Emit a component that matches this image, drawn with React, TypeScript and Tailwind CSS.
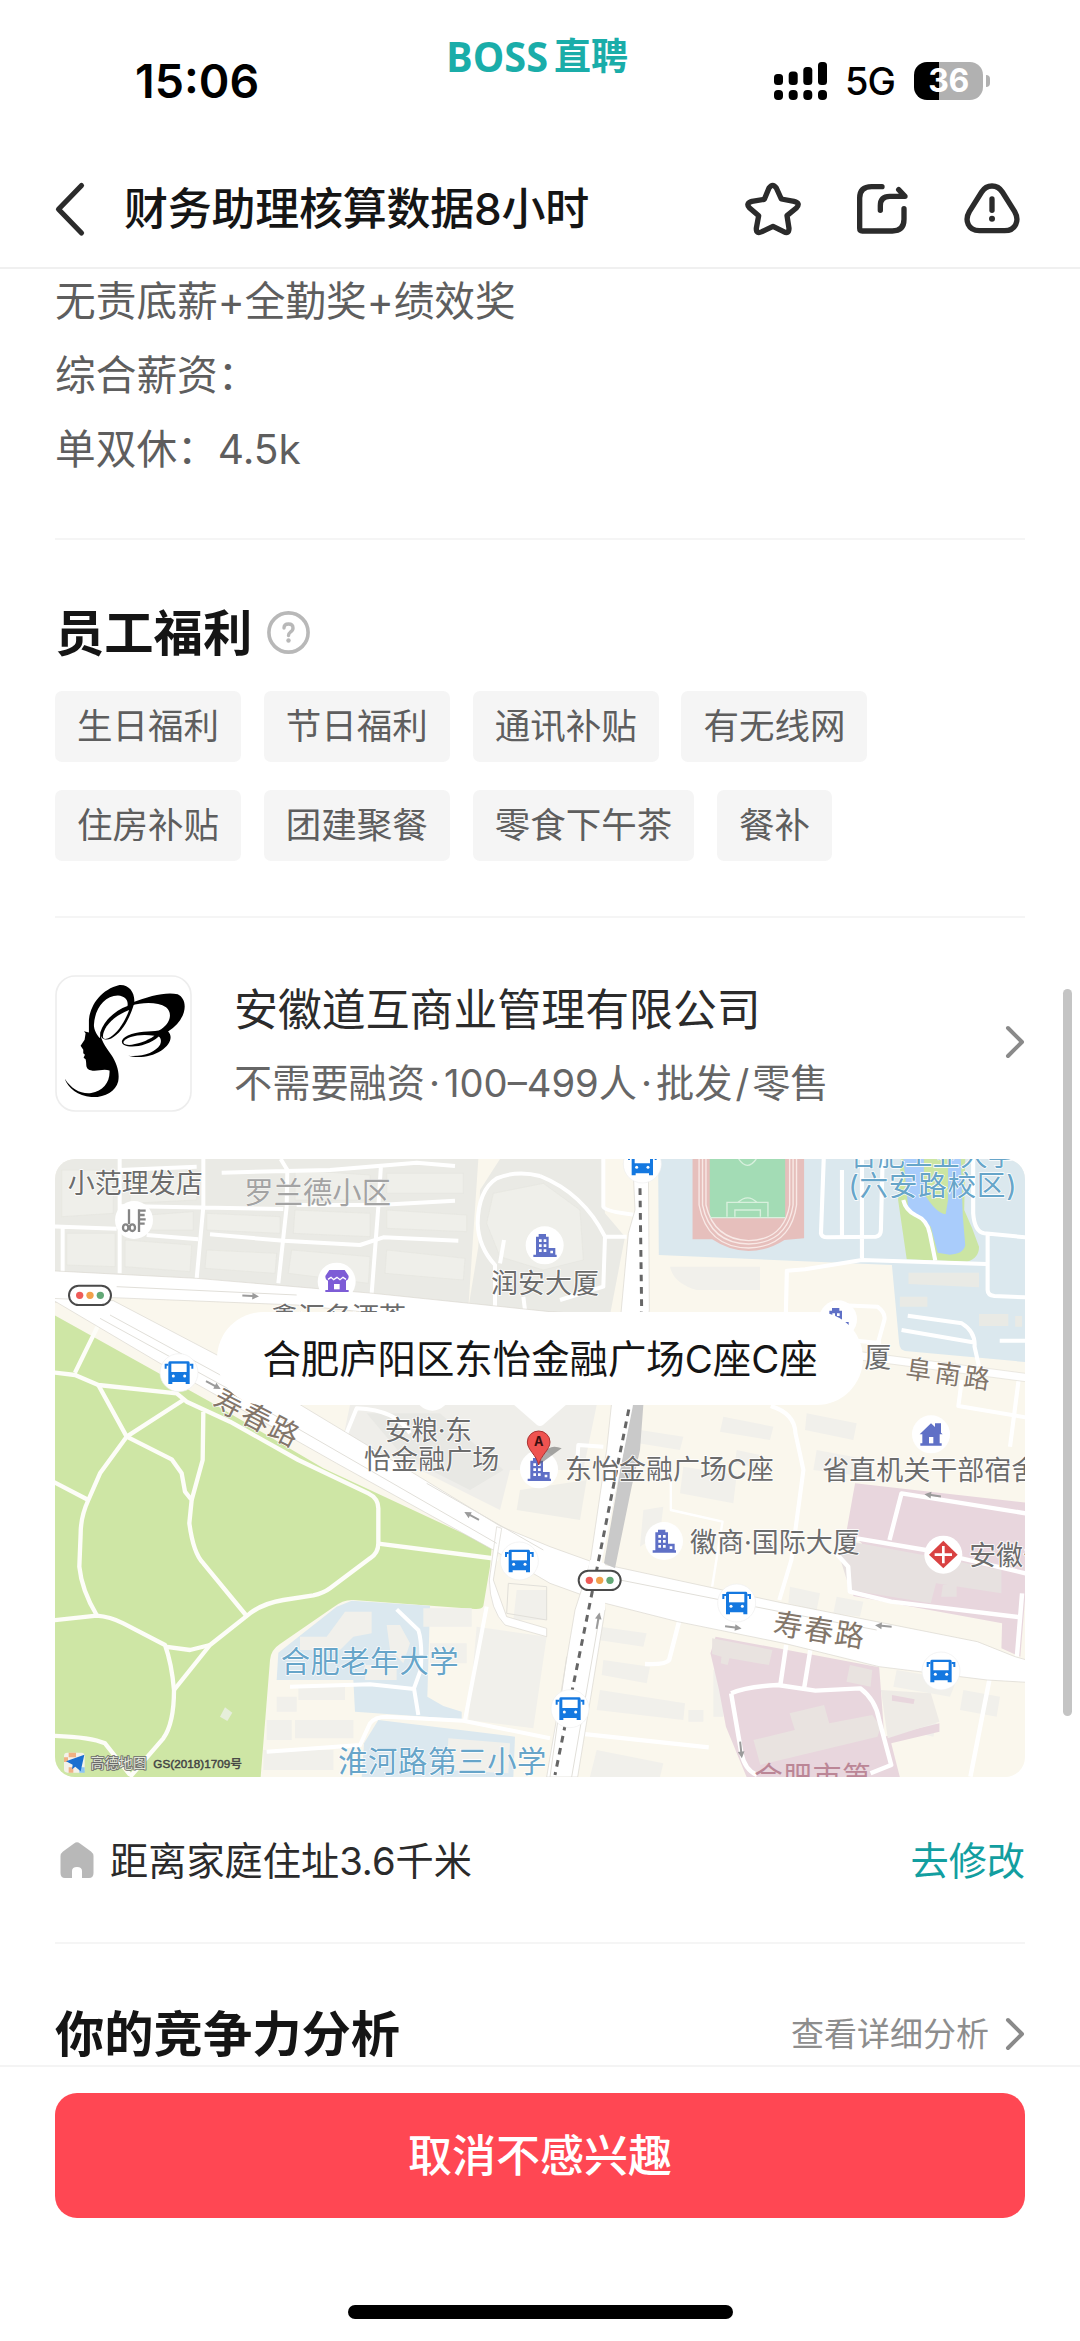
import React from 'react';

const benefitRows: string[][] = [
    ['生日福利', '节日福利', '通讯补贴', '有无线网'],
    ['住房补贴', '团建聚餐', '零食下午茶', '餐补'],
];

const Divider: React.FC<{ className?: string }> = ({ className = '' }) => (
    <div className={`h-[2px] bg-[#f5f5f5] ${className}`} />
);

const Chevron: React.FC = () => (
    <svg className="w-[20px] h-[34px]" viewBox="0 0 20 34" fill="none" stroke="#8a8a8a" strokeWidth="4" strokeLinecap="round" strokeLinejoin="round">
        <path d="M3 3 L17 17 L3 31" />
    </svg>
);

const StatusBar: React.FC = () => (
    <div className="relative h-[150px]">
        <div className="flex items-center justify-between h-[54px] pt-[54px] pl-[135px] pr-[93px] box-content">
            <span className="text-[46.5px] leading-[54px] font-semibold text-black">15:06</span>
            <div className="flex items-center">
                <svg className="w-[53px] h-[38px]" viewBox="0 0 53 38">
                    <rect x="0" y="12" width="9" height="11" rx="3.5" />
                    <rect x="14.7" y="9.5" width="9" height="13.5" rx="3.5" />
                    <rect x="29.3" y="5" width="9" height="18" rx="3.5" />
                    <rect x="44" y="0" width="9" height="23" rx="3.5" />
                    <rect x="0" y="28" width="9" height="10" rx="4" />
                    <rect x="14.7" y="28" width="9" height="10" rx="4" />
                    <rect x="29.3" y="28" width="9" height="10" rx="4" />
                    <rect x="44" y="28" width="9" height="10" rx="4" />
                </svg>
                <span className="ml-[18px] w-[50px] text-[38px] leading-[40px] font-medium tracking-[-1px] text-black">5G</span>
                <div className="ml-[19px] flex w-[69px] h-[38px] items-center justify-center rounded-[13px] bg-[linear-gradient(90deg,#000_25px,#b1b1b1_25px)] text-[32px] leading-[38px] font-bold tracking-[-0.5px] text-white">
                    36
                </div>
                <div className="ml-[3px] -mr-[3px] w-[4px] h-[12px] rounded-r-full bg-[#b1b1b1]" />
            </div>
        </div>
        <svg className="absolute left-[440px] top-[20px] w-[200px] h-[70px]" viewBox="440 20 200 70" fill="#1aada9">
            <text x="446" y="72" fontSize="42" fontWeight="700" textLength="102" lengthAdjust="spacingAndGlyphs" className="font-['Open_Sans']">BOSS</text>
            <text x="554" y="69.5" fontSize="37" fontWeight="700" textLength="74" className="font-['Noto_Sans_CJK_SC']">直聘</text>
        </svg>
    </div>
);

const TopBar: React.FC = () => (
    <div className="flex items-center h-[117px] pl-[54px] pr-[58px]">
        <svg className="w-[32px] h-[56px]" viewBox="54 180 32 56" fill="none" stroke="#2b2b2b" strokeWidth="5.2" strokeLinecap="round" strokeLinejoin="round">
            <path d="M81.5 184.5 L58.5 208.3 L81.5 232" />
        </svg>
        <h1 className="ml-[38px] text-[44px] leading-[60px] font-medium tracking-[-0.25px] text-[#151515] whitespace-nowrap">财务助理核算数据8小时</h1>
        <div className="ml-auto flex items-center text-[#2b2b2b]">
            <svg className="w-[60px] h-[56px]" viewBox="127 420 180 168" fill="none" stroke="currentColor" strokeWidth="16" strokeLinejoin="round">
                <path d="M205 441 Q216 425 227 441 L242 474 L280 481 Q301 486 287 501 L259 524 L265 562 Q265 581 249 572 L217 556 L184 572 Q166 580 167 562 L174 524 L146 500 Q134 487 154 481 L191 475 Z" />
            </svg>
            <svg className="ml-[51px] w-[56px] h-[56px]" viewBox="463 420 168 168" fill="none" stroke="currentColor" strokeWidth="16" strokeLinecap="round" strokeLinejoin="round">
                <path d="M547 437 H516 Q480 437 480 471 V562 Q480 570 488 570 H578 Q613 570 613 535 V503" />
                <path d="M542 508 V494 Q542 466 570 466 H616 L597 446" />
            </svg>
            <svg className="ml-[52px] w-[60px] h-[56px]" viewBox="788 416 180 168" fill="none" stroke="currentColor" strokeWidth="16" strokeLinecap="round">
                <path d="M847 449 C862 425 894 425 909 449 L946 508 C961 534 950 565 916 565 H840 C806 565 795 534 810 508 Z" />
                <path d="M878 470 V504" />
                <circle cx="878" cy="529" r="9" fill="currentColor" stroke="none" />
            </svg>
        </div>
    </div>
);

const CompanyLogo: React.FC = () => (
    <svg className="w-[137px] h-[137px] shrink-0" viewBox="16 15 412 412">
        <rect x="19" y="18" width="406" height="406" rx="58" fill="#fff" stroke="#ededed" strokeWidth="5" />
        <path d="M118 188 L118 150 C122 105 155 58 210 45 C240 43 258 70 254 100 C240 150 215 190 185 206 C170 213 152 208 153 190 C151 203 165 228 185 255 C202 280 211 310 206 335 C198 365 165 384 125 382 C85 378 55 355 45 326 C65 358 95 374 125 370 C160 364 182 338 180 302 C165 297 150 302 135 303 C118 303 110 297 110 285 C110 278 109 272 108 268 L102 264 L106 255 L101 250 L101 240 L93 228 L105 210 L108 190 L103 184 Z" />
        <path d="M133 165 C136 115 165 78 205 77 C228 79 237 92 234 108 C200 120 165 148 152 188 L151 205 C142 195 133 180 133 165 Z" fill="#fff" />
        <path d="M160 200 C160 175 190 138 239 120 C225 158 205 187 182 202 C168 210 160 208 160 200 Z" fill="#fff" />
        <path d="M248 98 C300 78 350 65 385 73 C420 90 412 150 356 185 C372 200 362 225 335 243 C305 262 265 266 236 258 C280 262 318 248 332 225 C337 212 334 205 328 200 C300 225 260 233 235 229 C210 224 212 208 235 197 C265 184 300 186 328 182 C362 165 372 130 350 112 C325 96 280 96 244 108 Z" />
        <path d="M222 216 C228 200 275 190 315 198 C292 215 255 227 233 225 C224 224 221 221 222 216 Z" fill="#fff" />
    </svg>
);

type PointProps = { x: number; y: number };

const Bus: React.FC<PointProps> = ({ x, y }) => (
    <g transform={`translate(${x} ${y})`}>
        <circle r="57" fill="#fff" stroke="#eee" strokeWidth="2" />
        <path d="M-28 -34 H28 Q32 -34 32 -28 V34 H20 V28 H-20 V34 H-32 V-28 Q-32 -34 -28 -34 Z" fill="#1478e0" />
        <path d="M-32 -24 H-40 V-12 M32 -24 H40 V-12" fill="none" stroke="#1478e0" strokeWidth="6" />
        <path d="M-23 -27 H23 V-2 H-23 Z" fill="#fff" />
        <circle cx="-17" cy="10" r="4.5" fill="#fff" />
        <circle cx="17" cy="10" r="4.5" fill="#fff" />
    </g>
);

const Tower: React.FC<PointProps> = ({ x, y }) => (
    <g transform={`translate(${x} ${y})`}>
        <circle r="57" fill="#fff" />
        <path d="M-26 28 V-26 H-18 V-34 H4 V-26 H12 V8 H32 V28 H36 V35 H-34 V28 Z" fill="#5f70c6" />
        <path d="M-17 -18 h8 v8 h-8z M-3 -18 h8 v8 h-8z M-17 -3 h8 v8 h-8z M-3 -3 h8 v8 h-8z M-17 12 h8 v8 h-8z M-3 12 h8 v8 h-8z M17 16 h8 v8 h-8z" fill="#fff" />
    </g>
);

const TrafficLight: React.FC<PointProps> = ({ x, y }) => (
    <g transform={`translate(${x} ${y})`}>
        <rect x="-63" y="-29" width="126" height="58" rx="29" fill="#fff" stroke="#4a4a4a" strokeWidth="6" />
        <circle cx="-31" r="11" fill="#ee5b58" />
        <circle r="11" fill="#f1a14b" />
        <circle cx="31" r="11" fill="#62a876" />
    </g>
);

const Arrow: React.FC<PointProps & { rotate: number }> = ({ x, y, rotate }) => (
    <g transform={`translate(${x} ${y}) rotate(${rotate})`} fill="#9b9b9b">
        <path d="M-25 -3 H5 V-10 L25 0 L5 10 V3 H-25 Z" />
    </g>
);

// Map artwork is drawn at three units per pixel
const DistrictMap: React.FC = () => (
    <svg className="block w-[970px] h-[618px]" viewBox="15 27 2910 1854" fontWeight="400">
        <rect x="0" y="0" width="2950" height="1900" fill="#faf7ed" />

        {/* residential blocks */}
        <path d="M0 27 H1285 L1255 475 L965 430 L0 365 Z" fill="#eaeae5" />
        <path d="M1350 27 H1655 L1665 190 L1725 260 L1680 495 L1255 475 L1285 290 L1290 120 Z" fill="#eaeae5" />
        <g fill="#efefea" stroke="#e5e5df" strokeWidth="2">
            <path d="M35 60 H190 V190 L35 200 Z M50 250 H195 V350 L50 345 Z M225 200 L430 185 V240 H225 Z M225 270 L425 285 L420 365 L225 350 Z" />
            <path d="M240 90 L440 75 V150 L240 160 Z M470 190 L690 200 V250 L470 240 Z M470 300 L680 310 L675 370 L465 355 Z" />
            <path d="M735 180 L960 190 V260 L730 250 Z M725 300 L960 320 L955 400 L715 370 Z M1010 180 L1250 195 V245 L1010 235 Z M1010 300 L1245 325 L1240 390 L1005 370 Z" />
            <path d="M735 60 L960 75 V150 H735 Z M1010 70 H1240 V130 H1010 Z" />
            <path d="M1330 130 L1480 100 L1590 180 L1600 330 L1480 360 L1350 320 L1310 220 Z" />
        </g>
        <path d="M900 765 H1640 L1600 960 L1380 960 L1350 1080 L1070 940 L880 860 Z" fill="#efeeea" />
        <path d="M950 790 L1170 790 L1360 960 L1260 1020 L1060 920 Z" fill="#e8e8e4" />
        <path d="M1410 1020 L1610 990 L1590 1110 L1400 1080 Z" fill="#efeee8" />

        {/* park */}
        <path d="M0 488 L480 755 L820 955 L1325 1190 L1320 1250 L1300 1368 Q1297 1378 1275 1377 L910 1350 Q880 1348 850 1372 L690 1482 Q662 1500 660 1530 L632 1881 H0 Z" fill="#cee6a5" />
        <g fill="none" stroke="#fdfdf8" strokeWidth="13" strokeLinejoin="round">
            <path d="M150 515 L75 668 M0 666 L75 675 L145 705 L380 730 L410 755 L540 815 L745 930 L955 1030 Q985 1045 985 1075 V1180 Q985 1210 960 1225 L840 1315 Q820 1330 790 1336 L700 1350 Q640 1360 600 1390 L480 1485 L372 1620" />
            <path d="M145 705 L230 860 L365 928 L395 970 L405 1025 L425 1050 L418 1120 Q430 1210 460 1240 L590 1398" />
            <path d="M400 750 L230 860 L150 970 L115 1050 Q92 1100 92 1150 L88 1250 Q95 1320 140 1395" />
            <path d="M460 785 L458 930 L425 1050 M0 990 L115 1050 M0 1412 L140 1397 Q180 1400 220 1420 L345 1485 Q365 1540 372 1620 Q372 1720 340 1765 L240 1881 M345 1490 L420 1500 L480 1485" />
            <path d="M985 1181 L1345 1227 M0 1757 Q120 1760 165 1780 L240 1875" />
        </g>
        <path d="M525 1672 L547 1688 L532 1713 L510 1700 Z" fill="#e6eedb" />

        {/* schools on the south side */}
        <path d="M905 1352 L1140 1367 L1132 1640 L1180 1668 L1235 1685 V1708 L915 1685 L910 1590 H680 L685 1508 L860 1370 Z" fill="#dbe8ef" />
        <path d="M985 1710 L1395 1760 L1390 1881 H935 L942 1780 Z" fill="#dbe8ef" />
        <g fill="#f1f0eb">
            <path d="M885 1385 H965 V1450 L910 1460 L870 1500 H750 V1460 H830 Z M1010 1425 H1050 L1080 1480 L1060 1540 L1020 1500 Z M945 1545 H1040 V1590 H945 Z" />
            <path d="M1120 1375 H1265 V1430 H1120 Z M1140 1480 H1250 V1540 H1140 Z M680 1640 H740 V1685 H680 Z M745 1610 H885 V1650 H745 Z M650 1710 H725 V1770 H650 Z M735 1710 H910 V1765 H735 Z M640 1800 H850 V1860 H640 Z M1280 1430 L1490 1460 L1450 1735 L1255 1710 Z M1195 1765 L1380 1780 L1375 1870 L1190 1860 Z M1400 1320 H1490 V1410 H1390 Z" />
            <path d="M1650 1430 L1790 1450 L1780 1490 L1645 1470 Z M1660 1530 L1800 1550 L1790 1600 L1655 1575 Z M1650 1620 L1905 1660 L1900 1710 L1640 1680 Z M1640 1800 L1840 1840 L1830 1881 H1620 Z M1990 1560 H2020 V1700 H1990 Z M1915 1680 H1960 V1715 H1915 Z" />
            <path d="M1770 840 L1900 860 L1890 900 L1765 880 Z M1900 950 L2060 975 L2050 1060 L1890 1030 Z M2020 800 L2170 830 L2160 870 L2010 845 Z M2270 790 L2420 820 L2410 870 L2265 840 Z M2300 900 L2460 930 L2450 980 L2290 960 Z M1780 1080 L1840 1070 L1830 1150 L1770 1190 Z M2060 900 L2130 915 L2125 955 L2055 940 Z M2220 1310 L2310 1330 L2300 1380 L2215 1360 Z M2360 1340 L2440 1355 L2430 1400 L2350 1390 Z" />
            <path d="M1860 490 L1930 490 L1930 550 L2210 600 L2210 630 L1900 620 Z M1860 350 H2130 V420 L1940 420 Q1870 400 1860 350 Z M2540 1560 L2720 1590 L2700 1640 L2530 1610 Z M2580 1700 L2660 1720 L2650 1760 L2570 1740 Z M2740 1620 L2850 1640 L2840 1700 L2730 1680 Z" />
        </g>
        <g fill="none" stroke="#fff" strokeWidth="12">
            <path d="M1040 1378 L1105 1440 Q1118 1480 1112 1560 L1092 1615 L1105 1695 M720 1610 L960 1603 L1092 1617 M650 1805 L930 1785 L960 1720 Q975 1700 1010 1700 L1240 1712 L1500 1765 M1310 1370 L1245 1710" />
        </g>

        {/* campus and stadium */}
        <g transform="translate(1470 0) scale(1.033 1)">
            <path d="M343 27 H1410 V636 L1060 603 Q1045 600 1043 580 L1022 345 L345 315 Z" fill="#dbe8ee" />
            <path d="M443 27 H767 V265 L710 270 Q660 303 606 303 Q550 303 500 268 H443 Z" fill="#e6bfbc" />
            <path d="M493 27 H712 V203 H493 Z" fill="#a3dcb5" />
            <g fill="none" stroke="#f8e9e6" strokeWidth="4">
                <path d="M462 27 V165 Q485 292 606 294 Q728 290 745 165 V27 M472 27 V165 Q495 280 606 282 Q718 280 735 165 V27 M482 27 V165 Q505 268 606 272 Q708 270 725 165 V27" />
                <path d="M493 203 H712 M543 200 V157 H662 V200 M566 200 V180 H640 V200 M575 157 Q603 130 630 157 M577 27 Q602 65 628 27" stroke="#d8f0dd" />
            </g>
            <path d="M1048 27 H1235 L1232 180 L1255 235 L1275 290 Q1275 325 1240 335 L1065 328 L1040 150 Z" fill="#cbe5a3" />
            <path d="M1055 27 H1222 L1228 200 L1235 285 Q1230 312 1190 314 L1155 308 L1135 230 L1070 180 Z" fill="#a9ccfb" />
            <path d="M1115 27 H1185 V150 L1178 193 Q1150 190 1115 130 Z" fill="#cbe5a3" />
            <path d="M1070 368 H1275 V412 L1070 402 Z M1045 440 H1125 V470 H1045 Z M1275 492 H1360 V528 H1275 Z M1380 498 H1400 V530 H1380 Z" fill="#e9eae5" />
            <g fill="none" stroke="#fff" strokeWidth="12" strokeLinejoin="round">
                <path d="M824 27 L816 250 Q818 262 835 262 L975 260 Q990 258 990 240 L995 27 M877 60 V258 M935 27 V325 M1055 150 Q1062 180 1090 195 Q1125 210 1132 250 L1148 332" />
                <path d="M714 490 L717 362 L770 358 L935 330 L1295 342 M1258 27 V190 Q1262 245 1290 250 L1410 262 M1300 255 V420 Q1300 436 1320 438 L1410 442" />
                <path d="M1068 497 L1225 520 Q1265 545 1262 590 L1275 650 M1050 540 L1265 578 M1335 572 H1410" />
                <path d="M860 465 L980 470 Q1005 490 1000 510 L980 585 M900 570 L990 580 M1225 690 L1215 768 L1410 802 M1390 690 L1365 890 M670 768 Q740 790 742 850 L765 960 L730 1230 L695 1350" />
                <path d="M380 980 V1080 L530 1115 L500 1310" strokeWidth="7" />
            </g>
            <path d="M930 605 L1410 670 V695 L930 630 Z" fill="#fff" stroke="#e2dfd6" strokeWidth="2" />
        </g>

        {/* hospitals */}
        <g transform="translate(1470 930) scale(1.033 1)">
            <path d="M915 70 L1410 128 V400 L1395 590 L1340 565 L1342 490 L910 408 L905 330 L935 250 L890 215 Z" fill="#e8d6dd" />
            <path d="M905 245 L1140 290 L1340 330 V400 L1150 370 L1135 430 L900 390 L870 290 Z" fill="#e7e1e0" />
            <path d="M1170 375 H1210 V410 H1165 Z" fill="#e7e1e0" />
            <path d="M510 530 L985 622 L990 690 L1000 830 L1160 790 V815 L1020 850 L1045 951 H600 L540 800 L520 690 L495 580 Z" fill="#e8d6dd" />
            <path d="M500 535 L675 570 L665 615 L550 595 L545 615 L525 610 L527 590 L500 582 Z M900 615 L965 630 L960 680 L890 665 Z M620 840 L740 810 L725 760 L825 735 L840 790 L965 765 L990 800 L980 830 L640 915 Z" fill="#e9e3e0" />
            <path d="M990 690 L1135 700 L1160 785 L1010 835 Z" fill="#eeebe6" />
            <path d="M1022 705 L1088 718 L1085 732 L1022 722 Z" fill="#e8d6dd" />
            <g fill="none" stroke="#fff" strokeWidth="13" strokeLinejoin="round">
                <path d="M1015 240 L1050 100 L1410 160 M920 235 L1120 270 L1410 340 M860 280 L895 320 L900 395 L1020 425 L1395 472 M1400 400 L1385 590" />
                <path d="M715 555 L698 675 M785 570 L767 685 M555 700 Q600 680 690 675 L800 692 L930 685 Q975 720 985 780 L1020 915 L960 940 M555 700 L585 880 Q595 930 630 945 M1305 660 L1250 950 M405 480 L375 600 Q365 615 305 612 M110 820 L490 862" />
            </g>
        </g>

        {/* minor streets */}
        <g fill="none" stroke="#fff" strokeWidth="12" strokeLinejoin="round">
            <path d="M209 27 V370 M460 27 V170 L440 385 M692 27 L712 60 L710 170 L685 400 M993 45 L985 170 L965 430 M209 60 L440 50 M515 68 L840 60 L1100 38 L1215 48 M209 168 L700 177 M740 165 L985 165 L1215 152" />
            <path d="M0 229 L200 236 M38 229 V370 M290 255 L445 268 M480 253 L700 272 L930 285 L1000 262 L1225 272" />
            <path d="M1470 78 Q1400 60 1340 85 Q1285 120 1283 220 Q1285 290 1335 345 V470 M1350 340 L1362 270 M1470 78 Q1600 130 1665 260 L1660 410 L1530 450 M1665 260 H1730 M1660 27 V170 Q1665 185 1760 195 M1420 440 L1425 480" />
            <path d="M885 860 L920 775 Q1040 780 1080 850 M1580 960 L1585 885 L1660 890" />
        </g>

        {/* main roads */}
        <g fill="#fff" stroke="#d9d7cf" strokeWidth="2">
            <path d="M0 362 L440 385 L970 430 L1500 485 L1750 500 V570 L740 465 L190 443 L0 458 Z" />
            <path d="M0 445 L190 452 L520 625 L1070 957 L1350 1128 L1500 1190 L1625 1235 L2193 1358 L2782 1475 L2895 1520 L2930 1530 V1597 L2812 1590 L2487 1550 L2203 1480 L1883 1415 L1666 1360 L1500 1300 L1330 1200 L860 940 L330 640 Z" />
            <path d="M1748 27 H1795 L1798 480 L1745 800 L1650 1240 L1665 1380 L1583 1881 H1490 L1575 1380 L1620 1240 L1670 900 L1712 500 L1735 250 L1755 180 Z" />
            <path d="M1340 1130 L1355 1135 L1330 1290 L1370 1400 L1490 1435 V1460 L1365 1425 Q1320 1380 1318 1290 Z" />
        </g>
        <path d="M1620 1230 L1665 1240 V1380 L1590 1380 Z" fill="#fff" />
        <g fill="none" stroke="#e1dfd9" strokeWidth="3">
            <path d="M150 505 L560 730 L1340 1180 M180 495 L520 680 M1130 1000 L1480 1200 M200 410 L740 435 M1710 1290 L2190 1385 L2480 1440 M1375 1300 L1490 1310 V1410 L1370 1390 Z" />
            <path d="M1550 1520 L1500 1881 M1650 1390 L1565 1881" />
        </g>
        <path d="M1745 765 H1780 L1770 900 L1745 1010 L1695 1255 L1662 1240 Z" fill="#c9c9c9" />
        <path d="M1770 95 L1775 480 L1738 770 L1640 1260 L1515 1875" fill="none" stroke="#fff" strokeWidth="20" />
        <path d="M1770 115 L1775 480 L1738 770 L1640 1260 L1515 1875" fill="none" stroke="#666" strokeWidth="9" strokeDasharray="20 17" />

        <Arrow x={602} y={438} rotate={3} />
        <Arrow x={490} y={705} rotate={28} />
        <Arrow x={1265} y={1098} rotate={208} />
        <Arrow x={2648} y={1036} rotate={188} />
        <Arrow x={2050} y={1432} rotate={8} />
        <Arrow x={2500} y={1428} rotate={185} />
        <Arrow x={2073} y={1800} rotate={84} />
        <Arrow x={1644} y={1412} rotate={-80} />

        {/* points of interest */}
        <circle cx="252" cy="210" r="57" fill="#fff" />
        <g fill="none" stroke="#858585" strokeWidth="7">
            <path d="M237 178 V222 M267 178 V246 M267 182 H287 M267 195 H284 M267 208 H287 M267 221 H284" />
            <ellipse cx="227" cy="233" rx="8" ry="10" />
            <ellipse cx="247" cy="233" rx="8" ry="10" />
        </g>
        <circle cx="860" cy="395" r="57" fill="#fff" />
        <path d="M838 360 H884 L896 378 Q896 390 888 392 V420 H896 V426 H826 V420 H834 V392 Q826 390 826 378 Z" fill="#7d5cd6" />
        <path d="M834 388 L843 382 L851 389 L861 382 L870 389 L879 382 L888 388" fill="none" stroke="#fff" strokeWidth="4" />
        <path d="M852 402 H869 V418 H852 Z" fill="#fff" />
        <Tower x={1484} y={286} />
        <circle cx="1147" cy="730" r="52" fill="#fff" />
        <Tower x={2364} y={508} />
        <Tower x={1467} y={958} />
        <Tower x={1842} y={1173} />
        <g transform="translate(2643 853)">
            <circle r="57" fill="#fff" />
            <path d="M-34 0 L0 -33 L12 -22 V-33 H30 V-5 L35 0 H26 V27 H32 V34 H-32 V27 H-26 V0 Z" fill="#5f70c6" />
            <path d="M-6 8 H7 V27 H-6 Z" fill="#fff" />
        </g>
        <g transform="translate(2680 1214)">
            <circle r="57" fill="#fff" />
            <path d="M0 -42 L43 0 L0 41 L-43 0 Z" fill="#d94242" />
            <path d="M-26 0 H26 M0 -26 V26" stroke="#fff" strokeWidth="8" />
        </g>
        <Bus x={387} y={668} />
        <Bus x={1408} y={1233} />
        <Bus x={1777} y={42} />
        <Bus x={2060} y={1359} />
        <Bus x={2673} y={1563} />
        <Bus x={1560} y={1676} />
        <TrafficLight x={120} y={436} />
        <TrafficLight x={1649} y={1291} />

        {/* labels */}
        <g fill="#6c6c6c" stroke="#fff" strokeWidth="5" paintOrder="stroke" strokeLinejoin="round" fontSize="81">
            <text x="53" y="130">小范理发店</text>
            <text x="583" y="158" fontSize="88" fill="#a3a3a3" strokeWidth="2">罗兰德小区</text>
            <text x="1323" y="428">润安大厦</text>
            <text x="663" y="532">鑫汇名酒荟</text>
            <text x="2443" y="652">厦</text>
            <text x="1004" y="870" textLength="262">安粮·东</text>
            <text x="942" y="956" textLength="406">怡金融广场</text>
            <text x="1545" y="988" textLength="626">东怡金融广场C座</text>
            <text x="2317" y="991">省直机关干部宿舍</text>
            <text x="1920" y="1206" textLength="509">徽商·国际大厦</text>
            <text x="2757" y="1246">安徽省</text>
        </g>
        <g fill="#83766a" stroke="#fff" strokeWidth="4" paintOrder="stroke" fontSize="88">
            <text transform="translate(482 768) rotate(27)" textLength="275">寿春路</text>
            <text transform="translate(2166 1450) rotate(9)" textLength="275">寿春路</text>
            <text transform="translate(2564 682) rotate(8)" fontSize="78" textLength="254">阜南路</text>
        </g>
        <g fill="#67a5c9" stroke="#fff" strokeWidth="4" paintOrder="stroke" fontSize="88">
            <text x="2400" y="48" fontSize="82" textLength="495">合肥工业大学</text>
            <text x="2395" y="138" fontSize="86" textLength="505">(六安路校区)</text>
            <text x="692" y="1566" textLength="534">合肥老年大学</text>
            <text x="865" y="1865" textLength="624">淮河路第三小学</text>
        </g>
        <text x="2112" y="1912" fontSize="86" fill="#bb8696" textLength="350">合肥市第</text>

        {/* destination pin */}
        <path d="M1466 945 L1535 895 Q1500 880 1480 910 Z" fill="#555" opacity="0.5" />
        <path d="M1466 945 C1460 915 1432 900 1432 876 A34 33 0 0 1 1500 876 C1500 900 1472 915 1466 945 Z" fill="#ef5350" stroke="#a33" strokeWidth="3" />
        <text x="1466" y="888" fontSize="38" fontWeight="700" textAnchor="middle" fill="#3a1010">A</text>

        {/* provider mark */}
        <g transform="translate(0 930)">
            <rect x="42" y="878" width="62" height="60" rx="10" fill="#f3f1ea" />
            <path d="M56 878 H78 V892 H56 Z M42 892 H54 V906 H42 Z M56 922 H70 V938 H56 Z" fill="#f0b183" />
            <path d="M88 922 H104 V938 H88 Z" fill="#8cc4f2" />
            <path d="M103 884 L92 934 L76 920 L66 928 L68 914 L48 904 Z" fill="#1a6fd0" />
            <text x="122" y="923" fontSize="41" textLength="168" fill="#e4e8da" stroke="#6a6a6a" strokeWidth="5" paintOrder="stroke">高德地图</text>
            <text x="310" y="923" fontSize="35" textLength="266" fill="#444" stroke="#444" strokeWidth="1.4" className="font-['Liberation_Sans','Noto_Sans_CJK_SC',sans-serif]">GS(2018)1709号</text>
        </g>
    </svg>
);

const App: React.FC = (): React.ReactElement => {
    return (
        <div className="relative flex flex-col w-[1080px] h-[2341px] overflow-hidden bg-white font-['Inter','Noto_Sans_CJK_SC',sans-serif]">
            <header className="h-[269px] shrink-0 border-b-2 border-[#f0f0f0]">
                <StatusBar />
                <TopBar />
            </header>

            <main className="h-[1796px] shrink-0 overflow-hidden px-[55px]">
                <div className="-mt-[4px] text-[40.7px] leading-[74px] text-[#5e5e5e]">
                    <p>无责底薪+全勤奖+绩效奖</p>
                    <p>综合薪资：</p>
                    <p>单双休：4.5k</p>
                </div>
                <Divider className="mt-[51px]" />

                <section>
                    <div className="flex items-center mt-[63px]">
                        <h2 className="text-[49.3px] leading-[60px] font-bold text-[#151515]">员工福利</h2>
                        <svg className="ml-[15px] -mt-[2px] w-[43px] h-[43px]" viewBox="0 0 43 43" fill="none" stroke="#b8b8b8">
                            <circle cx="21.5" cy="21.5" r="19.6" strokeWidth="3.6" />
                            <path d="M17 17 Q17 13 21.5 13 Q26 13 26 17 Q26 19.5 23.5 21 Q21.5 22.5 21.5 24.5" strokeWidth="3.4" strokeLinecap="round" />
                            <circle cx="21.5" cy="29.5" r="2.2" fill="#b8b8b8" stroke="none" />
                        </svg>
                    </div>
                    <div className="flex flex-col gap-[28px] mt-[28px]">
                        {benefitRows.map((row) => (
                            <div className="flex gap-[22.8px]" key={row[0]}>
                                {row.map((benefit) => (
                                    <span className="px-[22px] rounded-[7px] bg-[#f5f5f5] text-[35.5px] leading-[71px] text-[#5e5e5e]" key={benefit}>
                                        {benefit}
                                    </span>
                                ))}
                            </div>
                        ))}
                    </div>
                </section>
                <Divider className="mt-[55px]" />

                <section className="flex items-center h-[137px] mt-[57px]">
                    <CompanyLogo />
                    <div className="ml-[42px] mt-[6px]">
                        <p className="text-[43.9px] leading-[73px] text-[#2b2b2b]">安徽道互商业管理有限公司</p>
                        <p className="text-[38.2px] leading-[73px] text-[#666]">
                            不需要融资<span className="mx-[4px]">·</span>100–499人<span className="mx-[4px]">·</span>批发
                            <span className="mx-[3px]">/</span>零售
                        </p>
                    </div>
                    <div className="flex ml-auto -mt-[4px]">
                        <Chevron />
                    </div>
                </section>

                <div className="relative mt-[47px] h-[618px] overflow-hidden rounded-[20px]">
                    <DistrictMap />
                    <div className="absolute left-[162px] top-[153px] w-[646px] h-[93px] rounded-full bg-white text-center text-[38.4px] leading-[94px] text-[#151515] whitespace-nowrap">
                        合肥庐阳区东怡金融广场C座C座
                    </div>
                    <svg className="absolute left-[458px] top-[245px] w-[54px] h-[24px]" viewBox="0 0 54 24" fill="#fff">
                        <path d="M0 0 H54 L30 21 Q27 23 24 21 Z" />
                    </svg>
                </div>

                <div className="flex items-center justify-between mt-[59px] text-[38.2px] leading-[50px]">
                    <div className="flex items-center">
                        <svg className="ml-[5px] -mt-[2px] w-[34px] h-[36px]" viewBox="0 0 34 36" fill="#b8b8b8">
                            <path d="M14 1.5 Q17 -1 20 1.5 L31 9.5 Q33.5 11.5 33.5 14 V31 Q33.5 36 29 36 H22 V29 Q22 25 17 25 Q12 25 12 29 V36 H5 Q.5 36 .5 31 V14 Q.5 11.5 3 9.5 Z" />
                        </svg>
                        <span className="ml-[16px] text-[#2b2b2b]">距离家庭住址3.6千米</span>
                    </div>
                    <span className="text-[#129ea0]">去修改</span>
                </div>
                <Divider className="mt-[56px]" />

                <div className="flex items-center justify-between mt-[60px]">
                    <h2 className="text-[49.3px] leading-[60px] font-bold text-[#151515]">你的竞争力分析</h2>
                    <div className="flex items-center text-[33px] leading-[60px] text-[#8d8d8d]">
                        <span className="mr-[16px]">查看详细分析</span>
                        <Chevron />
                    </div>
                </div>
            </main>

            <footer className="flex flex-col flex-1 items-center border-t-2 border-[#f4f4f4] bg-white">
                <button className="mt-[26px] w-[970px] h-[125px] rounded-[22px] bg-[#ff4753] text-[44px] font-medium text-white">
                    取消不感兴趣
                </button>
                <div className="mt-[87px] w-[385px] h-[14px] rounded-full bg-black" />
            </footer>

            <div className="absolute left-[1063px] top-[989px] w-[9px] h-[727px] rounded-full bg-[#c4c4c4]" />
        </div>
    );
};

export default App;
